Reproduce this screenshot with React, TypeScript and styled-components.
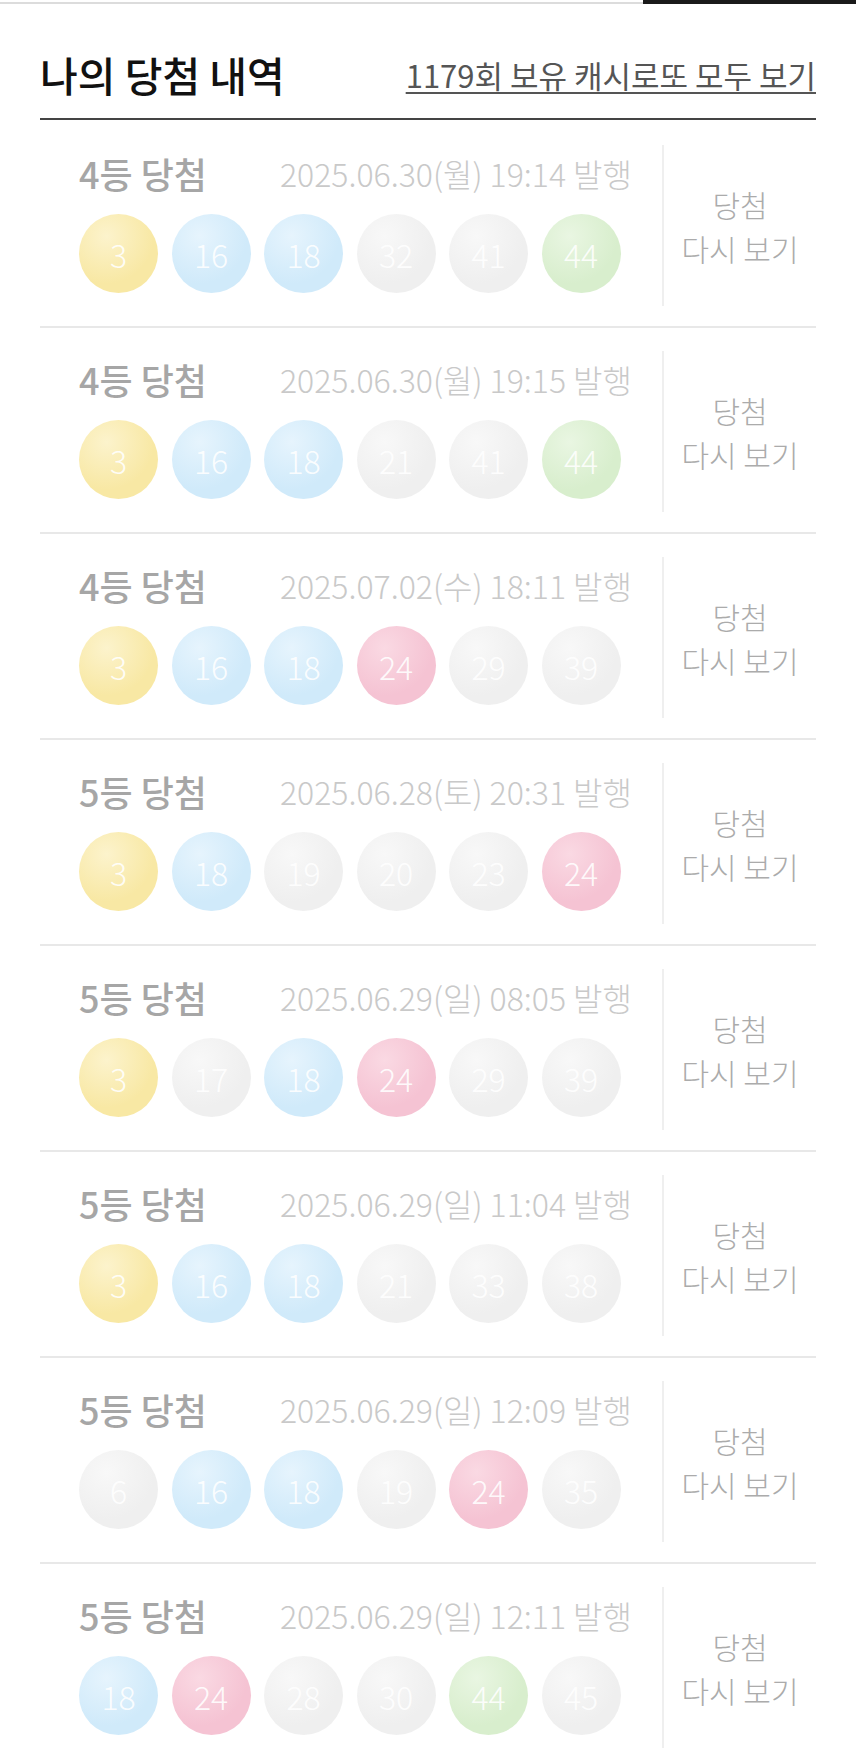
import * as React from 'react';
import styled, { createGlobalStyle } from 'styled-components';

const WIN_NUMBERS = [3, 16, 18, 24, 44];

const HISTORY = [
  { rank: 4, issued: '2025.06.30(월) 19:14', numbers: [3, 16, 18, 32, 41, 44] },
  { rank: 4, issued: '2025.06.30(월) 19:15', numbers: [3, 16, 18, 21, 41, 44] },
  { rank: 4, issued: '2025.07.02(수) 18:11', numbers: [3, 16, 18, 24, 29, 39] },
  { rank: 5, issued: '2025.06.28(토) 20:31', numbers: [3, 18, 19, 20, 23, 24] },
  { rank: 5, issued: '2025.06.29(일) 08:05', numbers: [3, 17, 18, 24, 29, 39] },
  { rank: 5, issued: '2025.06.29(일) 11:04', numbers: [3, 16, 18, 21, 33, 38] },
  { rank: 5, issued: '2025.06.29(일) 12:09', numbers: [6, 16, 18, 19, 24, 35] },
  { rank: 5, issued: '2025.06.29(일) 12:11', numbers: [18, 24, 28, 30, 44, 45] },
];

type Tone = 'yellow' | 'blue' | 'pink' | 'gray' | 'green';

const TONES: Record<Tone, { light: string; base: string }> = {
  yellow: { light: '#fcf3cc', base: '#f8e8a4' },
  blue: { light: '#e6f4fd', base: '#d0eafa' },
  pink: { light: '#fad9e3', base: '#f5c3d3' },
  gray: { light: '#f8f8f8', base: '#efefef' },
  green: { light: '#e9f6e2', base: '#d8eecd' },
};

const toneOf = (n: number): Tone => {
  if (!WIN_NUMBERS.includes(n)) return 'gray';
  if (n <= 10) return 'yellow';
  if (n <= 20) return 'blue';
  if (n <= 30) return 'pink';
  if (n <= 40) return 'gray';
  return 'green';
};

const GlobalStyle = createGlobalStyle`
  body {
    margin: 0;
    background: #fff;
    font-family: "Noto Sans CJK KR", "Noto Sans", sans-serif;
  }
`;

const Page = styled.div`
  width: 856px;
`;

const TopBar = styled.div`
  display: flex;
  align-items: flex-start;
  height: 4px;
`;

const TabTrack = styled.div`
  flex: 1;
  height: 2px;
  margin-top: 2px;
  background: #dcdcdc;
`;

const TabActive = styled.div`
  width: 213px;
  height: 4px;
  background: #1a1a1a;
`;

const Section = styled.section`
  padding: 0 40px;
`;

const Header = styled.div`
  display: flex;
  justify-content: space-between;
  align-items: center;
  padding: 46px 0 20px;
  border-bottom: 2px solid #444;
  margin-bottom: 2px;
`;

const Title = styled.h2`
  margin: 0;
  font-size: 41px;
  line-height: 48px;
  font-weight: 500;
  color: #111;
`;

const AllLink = styled.a`
  font-size: 31px;
  line-height: 38px;
  color: #555;
  text-decoration: underline;
  text-decoration-thickness: 2px;
  text-underline-offset: 4px;
  margin-top: 2px;
`;

const Row = styled.div`
  display: flex;
  height: 206px;
  box-sizing: border-box;
  border-bottom: 2px solid #e8e8e8;
`;

const Info = styled.div`
  flex: 1;
  padding: 32px 30px 0 39px;
`;

const InfoHead = styled.div`
  display: flex;
  justify-content: space-between;
  align-items: center;
  height: 38px;
`;

const Rank = styled.span`
  font-size: 36px;
  font-weight: 500;
  color: #a6a6a6;
`;

const Issued = styled.span`
  font-size: 32px;
  font-weight: 300;
  color: #c9c9c9;
`;

const Balls = styled.div`
  display: flex;
  gap: 13.5px;
  margin-top: 22px;
`;

const Ball = styled.span<{ $tone: Tone }>`
  display: flex;
  align-items: center;
  justify-content: center;
  width: 79px;
  height: 79px;
  border-radius: 50%;
  background: radial-gradient(
    circle at 35% 28%,
    ${p => TONES[p.$tone].light} 0%,
    ${p => TONES[p.$tone].base} 62%
  );
  font-size: 32px;
  font-weight: 300;
  color: rgba(255, 255, 255, 0.9);
`;

const Action = styled.button`
  display: flex;
  flex-direction: column;
  align-items: center;
  justify-content: center;
  width: 154px;
  margin: 23px 0 20px;
  padding: 0;
  border: none;
  border-left: 2px solid #efefef;
  background: none;
  font-family: inherit;
  font-size: 30px;
  line-height: 44px;
  font-weight: 300;
  color: #ababab;
`;

export default function App() {
  return (
    <Page>
      <GlobalStyle />
      <TopBar>
        <TabTrack />
        <TabActive />
      </TopBar>
      <Section>
        <Header>
          <Title>나의 당첨 내역</Title>
          <AllLink>1179회 보유 캐시로또 모두 보기</AllLink>
        </Header>
        {HISTORY.map(item => (
          <Row key={item.issued}>
            <Info>
              <InfoHead>
                <Rank>{item.rank}등 당첨</Rank>
                <Issued>{item.issued} 발행</Issued>
              </InfoHead>
              <Balls>
                {item.numbers.map(n => (
                  <Ball key={n} $tone={toneOf(n)}>
                    {n}
                  </Ball>
                ))}
              </Balls>
            </Info>
            <Action>
              <span>당첨</span>
              <span>다시 보기</span>
            </Action>
          </Row>
        ))}
      </Section>
    </Page>
  );
}
